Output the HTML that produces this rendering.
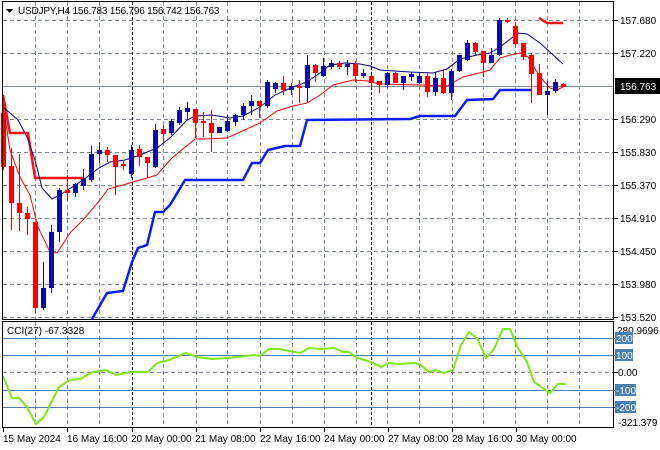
<!DOCTYPE html>
<html><head><meta charset="utf-8"><style>
html,body{margin:0;padding:0;background:#fff;width:660px;height:450px;overflow:hidden}
svg{display:block}
text{font-family:"Liberation Sans","DejaVu Sans",sans-serif;font-size:10px;fill:#000}
</style></head><body>
<svg width="660" height="450" viewBox="0 0 660 450" xmlns="http://www.w3.org/2000/svg" shape-rendering="crispEdges">
<rect width="660" height="450" fill="#fff"/>
<g stroke="#7f8a96" stroke-width="1" stroke-dasharray="4,3">
<line x1="3" y1="20.5" x2="613" y2="20.5"/><line x1="3" y1="53.5" x2="613" y2="53.5"/>
<line x1="3" y1="119.5" x2="613" y2="119.5"/><line x1="3" y1="152.5" x2="613" y2="152.5"/>
<line x1="3" y1="185.5" x2="613" y2="185.5"/><line x1="3" y1="218.5" x2="613" y2="218.5"/>
<line x1="3" y1="251.5" x2="613" y2="251.5"/><line x1="3" y1="284.5" x2="613" y2="284.5"/>
<line x1="3" y1="317.5" x2="613" y2="317.5"/>
<line x1="3" y1="372.5" x2="613" y2="372.5"/>
</g>
<g stroke="#7f8a96" stroke-width="1" stroke-dasharray="4,3">
<path d="M35.5 2V320M67.5 2V320M99.5 2V320M163.5 2V320M196.5 2V320M227.5 2V320M260.5 2V320M292.5 2V320M324.5 2V320M356.5 2V320M387.5 2V320M419.5 2V320M452.5 2V320M483.5 2V320M515.5 2V320M547.5 2V320M579.5 2V320"/>
<path d="M35.5 322V428M67.5 322V428M99.5 322V428M163.5 322V428M196.5 322V428M227.5 322V428M260.5 322V428M292.5 322V428M324.5 322V428M356.5 322V428M387.5 322V428M419.5 322V428M452.5 322V428M483.5 322V428M515.5 322V428M547.5 322V428M579.5 322V428"/>
</g>
<g stroke="#000" stroke-width="1" stroke-dasharray="3,2">
<path d="M132.5 2V320M371.5 2V320M132.5 322V428M371.5 322V428"/>
</g>
<line x1="3" y1="86.5" x2="613" y2="86.5" stroke="#7f8a96"/>
<g stroke="#4a7eb0" stroke-width="1">
<line x1="3" y1="338.5" x2="613" y2="338.5"/><line x1="3" y1="355.5" x2="613" y2="355.5"/>
<line x1="3" y1="390.5" x2="613" y2="390.5"/><line x1="3" y1="407.5" x2="613" y2="407.5"/>
</g>
<polyline shape-rendering="auto" fill="none" stroke="#0a1cff" stroke-width="2.5" points="92,319 107,293 123,291 132,262 138,248 147,245 155,212 163,212 170,205 185,180 243,180 252,163 260,163 268,150 285,146 300,146 307,120 410,119 420,116 455,116 467,100 493,99 500,90 531,90"/>
<polyline shape-rendering="auto" fill="none" stroke="#ff1010" stroke-width="2.5" points="3,95 10,133 28,133 35,178 83,178"/>
<polyline shape-rendering="auto" fill="none" stroke="#ff1010" stroke-width="2.5" points="539,18 547,23 563,23"/>
<polyline shape-rendering="auto" fill="none" stroke="#ff0000" stroke-width="1" points="3,105 10,150 20,177 30,195 38,227 50,252 57,253 70,233 83,220 100,200 108,189 123,185 133,182 147,178 157,175 170,160 172,158 195,139 203,139 227,138 260,123 277,111 293,106 307,103 320,95 333,85 353,80 367,81 380,84 420,85 447,86 463,77 483,72 490,70 500,58 510,55 520,53 528,57 540,77 550,88 557,90 563,87"/>
<polyline shape-rendering="auto" fill="none" stroke="#00007a" stroke-width="1" points="3,107 18,120 27,137 35,160 42,188 52,199 60,195 83,180 99,168 110,162 125,160 140,155 157,148 171,137 187,120 195,116 212,115 230,118 243,116 260,107 275,95 293,87 307,82 320,73 330,65 345,63 360,64 370,66 380,70 410,72 433,73 447,69 460,59 477,55 490,53 500,47 518,33 527,34 540,43 563,64"/>
<g id="c"></g>
<polyline shape-rendering="auto" fill="none" stroke="#7fe617" stroke-width="2" points="3,376 12,398 19,398 27,407 36,424 44,417 59,387 70,380 80,379 93,372 106,370 116,375 131,372 148,372 157,363 169,360 186,353 197,357 212,359 228,358 237,357 254,355 260,356 269,349 279,349 300,353 309,348 321,349 334,348 343,352 349,352 357,358 368,361 381,367 389,363 398,364 415,363 421,365 429,372 436,370 444,373 453,370 461,345 469,332 477,338 486,358 494,349 503,329 510,329 518,348 527,362 534,382 550,393 558,384 566,384"/>
<rect x="2.5" y="1.5" width="611" height="318" fill="none" stroke="#000"/>
<rect x="2.5" y="321.5" width="611" height="106" fill="none" stroke="#000"/>
<g stroke="#000"><path d="M614 20.5h4M614 53.5h4M614 119.5h4M614 152.5h4M614 185.5h4M614 218.5h4M614 251.5h4M614 284.5h4M614 317.5h4M614 338.5h4M614 355.5h4M614 372.5h4M614 390.5h4M614 407.5h4M3.5 428v4M67.5 428v4M132.5 428v4M196.5 428v4M260.5 428v4M324.5 428v4M388.5 428v4M452.5 428v4M516.5 428v4"/></g>
<text x="620" y="24">157.680</text>
<text x="620" y="57">157.220</text>
<rect x="615" y="78" width="45" height="16" fill="#000"/>
<text x="620" y="90" style="fill:#fff">156.763</text>
<text x="620" y="123">156.290</text>
<text x="620" y="156">155.830</text>
<text x="620" y="189">155.370</text>
<text x="620" y="222">154.910</text>
<text x="620" y="255">154.450</text>
<text x="620" y="288">153.980</text>
<text x="620" y="321">153.520</text>
<text x="617" y="334">280.9696</text>
<rect x="615" y="332" width="18" height="12" fill="#4a7eb0"/><text x="616" y="342" style="fill:#fff">200</text>
<rect x="615" y="349" width="18" height="12" fill="#4a7eb0"/><text x="616" y="359" style="fill:#fff">100</text>
<text x="618" y="376">0.00</text>
<rect x="615" y="384" width="21" height="12" fill="#4a7eb0"/><text x="616" y="394" style="fill:#fff">-100</text>
<rect x="615" y="401" width="21" height="12" fill="#4a7eb0"/><text x="616" y="411" style="fill:#fff">-200</text>
<text x="618" y="426">-321.379</text>
<path d="M6 9h7l-3.5 4z" fill="#000"/>
<text x="18" y="14" style="letter-spacing:-0.2px">USDJPY,H4  156.783 156.796 156.742 156.763</text>
<text x="7" y="334">CCI(27) -67.3328</text>
<text x="3" y="442">15 May 2024</text>
<text x="67" y="442">16 May 16:00</text>
<text x="131" y="442">20 May 00:00</text>
<text x="195" y="442">21 May 08:00</text>
<text x="260" y="442">22 May 16:00</text>
<text x="324" y="442">24 May 00:00</text>
<text x="388" y="442">27 May 08:00</text>
<text x="452" y="442">28 May 16:00</text>
<text x="516" y="442">30 May 00:00</text>
</svg>
<script>
var d=[[95,170,113,167],[148,230,166,203],[154,231,203,213],[207,235,213,219],[222,313,222,308],[262,310,308,288],[225,293,288,232],[188,242,232,190],[175,200,190,193],[183,197,193,184],[169,190,186,179],[146,182,180,154],[142,163,154,150],[147,162,150,155],[155,195,155,167],[161,170,164,166],[145,178,174,150],[145,166,149,157],[157,178,157,163],[124,168,167,130],[125,142,129,134],[119,135,133,121],[107,125,123,110],[102,120,112,108],[109,138,109,123],[112,137,121,123],[110,152,123,133],[127,133,133,127],[115,132,131,121],[114,126,122,115],[103,120,115,106],[95,115,106,101],[101,118,101,106],[80,108,106,82],[82,93,89,83],[76,95,83,90],[83,95,90,86],[80,103,86,88],[55,102,88,65],[64,82,65,73],[58,77,76,66],[60,69,67,63],[61,69,63,67],[60,75,67,64],[61,82,64,76],[69,78,76,73],[75,88,76,83],[81,93,81,85],[72,88,85,73],[72,83,73,83],[76,90,83,76],[72,81,77,74],[72,84,83,76],[73,97,76,92],[73,96,92,78],[69,94,78,93],[69,100,93,71],[55,72,71,55],[40,61,60,43],[42,55,43,52],[51,77,51,63],[48,63,63,55],[18,56,55,20],[18,23,20,22],[22,47,26,44],[43,60,43,57],[53,103,55,74],[64,95,73,95],[81,115,95,91],[79,93,91,82],[83,87,84,87]];
var s='';for(var i=0;i<d.length;i++){var c=d[i],x=3+8*i,col=c[3]>c[2]?'#ff0000':'#0a0aa8';var t=Math.min(c[2],c[3]),b=Math.max(c[2],c[3]);if(b-t<2)b=t+2;
s+='<line x1="'+(x+0.5)+'" y1="'+c[0]+'" x2="'+(x+0.5)+'" y2="'+c[1]+'" stroke="'+col+'"/>';
s+='<rect x="'+(x-2)+'" y="'+t+'" width="5" height="'+(b-t)+'" fill="'+col+'"/>';}
document.getElementById('c').innerHTML=s;
</script>
</body></html>
